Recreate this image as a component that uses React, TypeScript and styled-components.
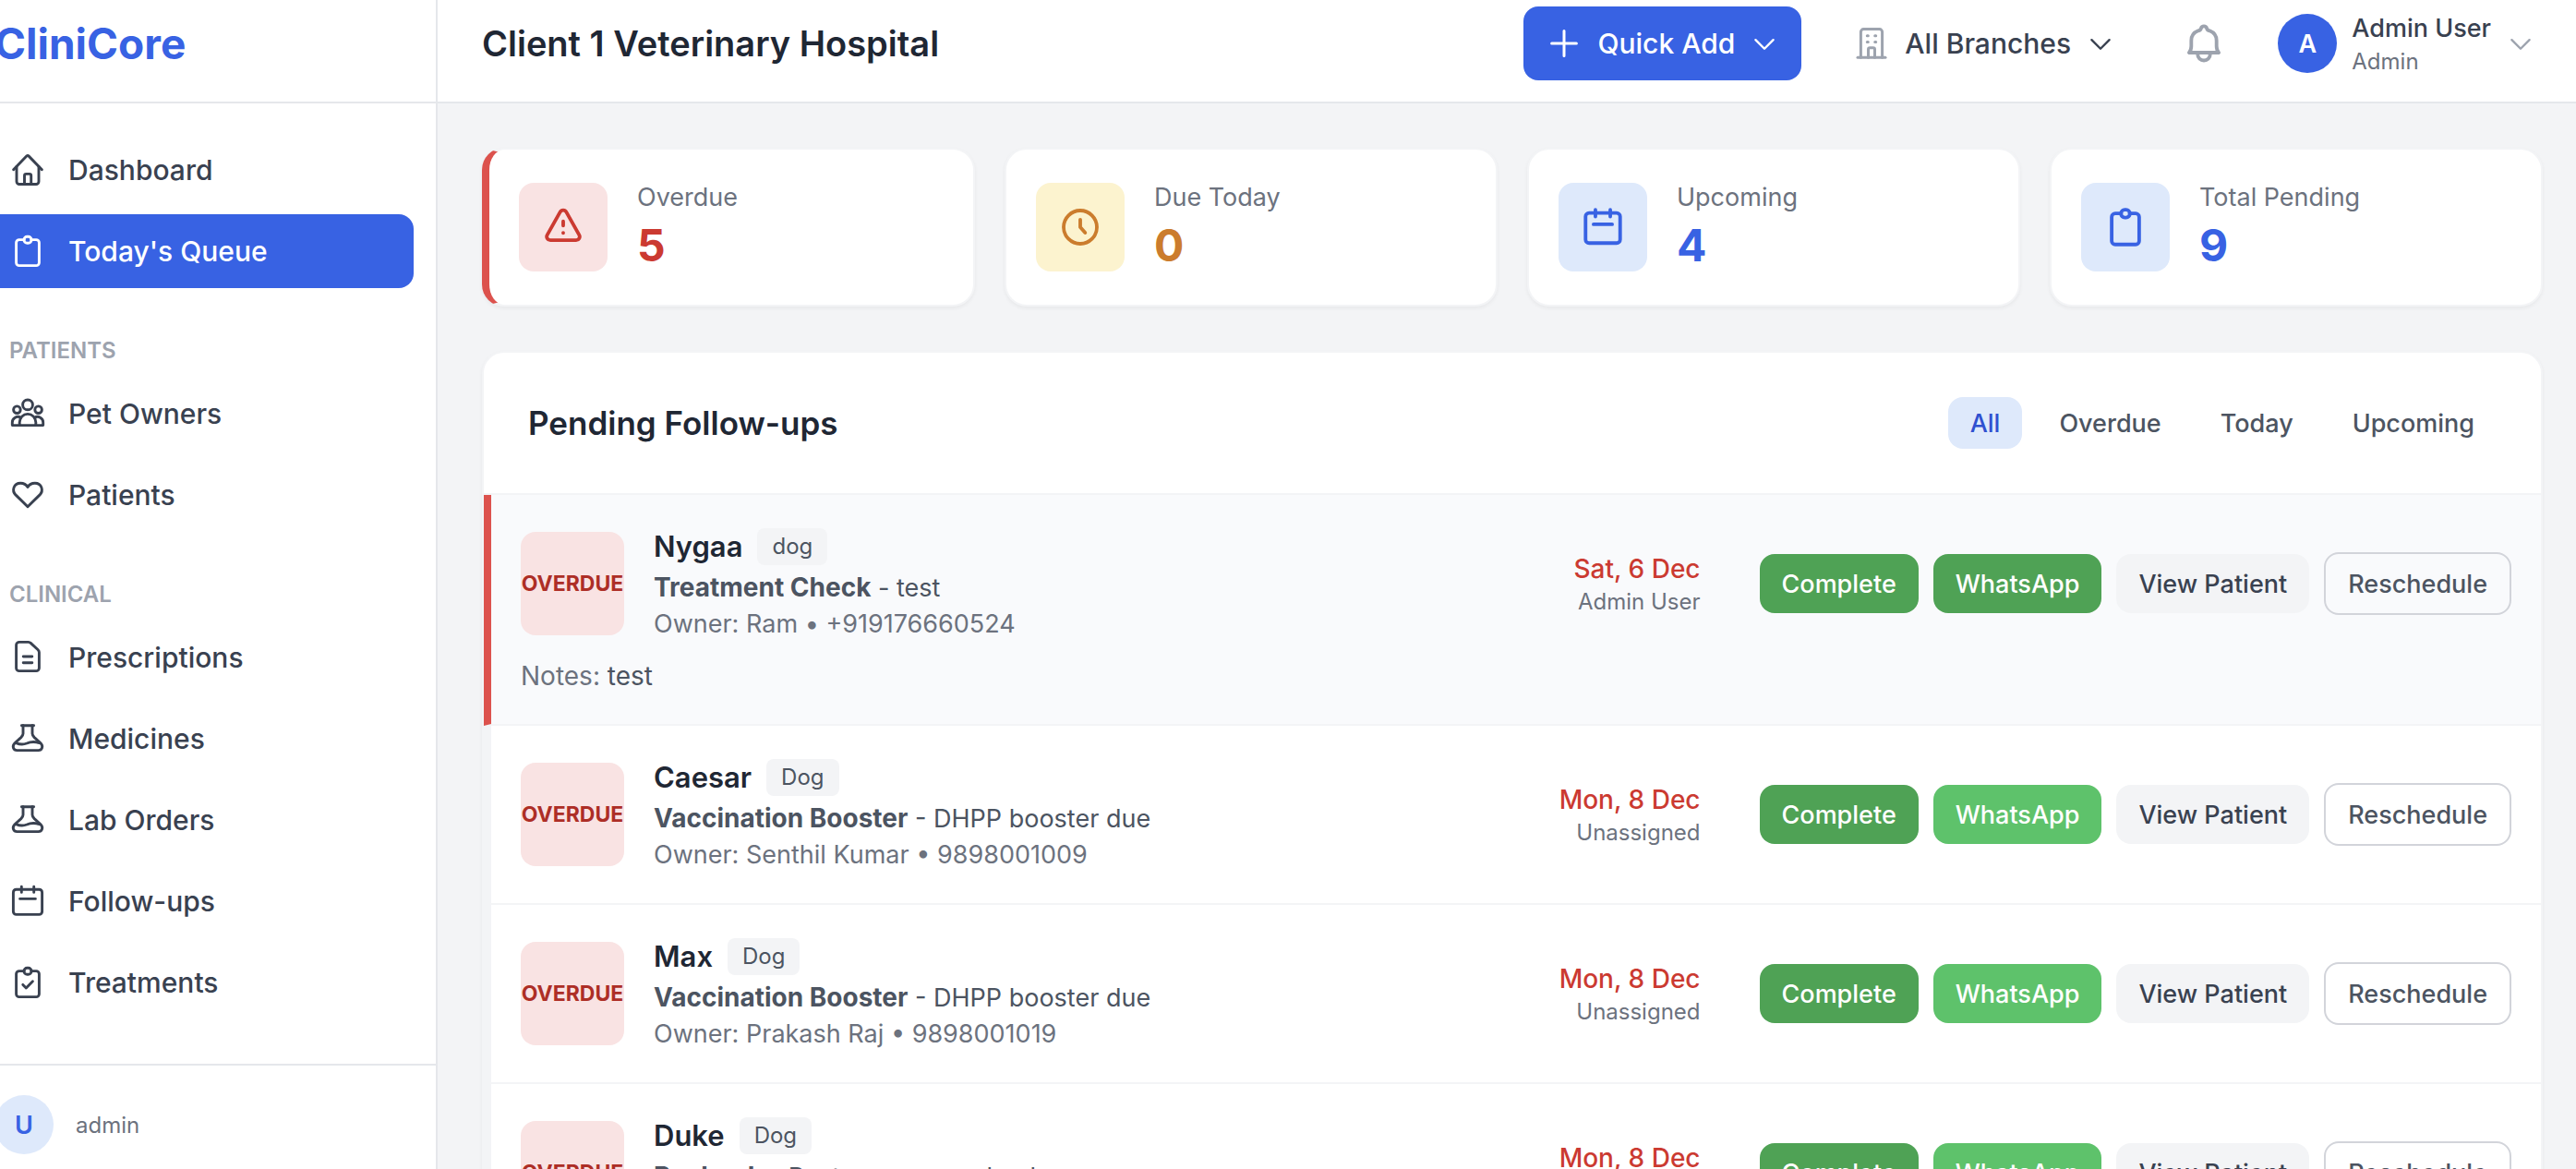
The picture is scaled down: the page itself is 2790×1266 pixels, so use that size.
import React from "react";
import styled, { createGlobalStyle, css } from "styled-components";

const color = {
  blue: "#3862e3",
  blueDark: "#2f50d0",
  blueSoft: "#dee9fb",
  ink: "#1f2734",
  text: "#394150",
  textMid: "#4c5461",
  textSoft: "#6c727e",
  textFaint: "#9da3ae",
  line: "#e5e7eb",
  surface: "#f3f4f6",
  hover: "#f9fafc",
  red: "#cb3a31",
  redDark: "#ad2e26",
  redLine: "#dc524d",
  redSoft: "#f9e3e3",
  amber: "#cb7c2d",
  amberSoft: "#fcf3cf",
  green: "#4fa255",
  greenLight: "#5ec26b",
};

const GlobalStyle = createGlobalStyle`
  *, *::before, *::after { box-sizing: border-box; }
  html, body, #root { height: 100%; }
  body {
    margin: 0;
    overflow: hidden;
    background: ${color.surface};
    color: ${color.text};
    font-family: Inter, "Liberation Sans", sans-serif;
    font-size: 30px;
    -webkit-font-smoothing: antialiased;
  }
  button, select { font: inherit; color: inherit; border: 0; background: none; padding: 0; cursor: pointer; }
  a { color: inherit; text-decoration: none; }
  h1, h2, h3, p, ul, dl, dt, dd { margin: 0; padding: 0; list-style: none; }
`;

/* ---------- icons ---------- */

type IconName =
  | "home" | "clipboard" | "clipboardCheck" | "people" | "heart" | "document"
  | "beaker" | "calendar" | "building" | "bell" | "warning" | "clock" | "plus" | "chevron";

const clipboardBody = (
  <>
    <path d="M16.2 7.6H10.8A3.2 3.2 0 0 0 7.6 10.8V32.4A3.2 3.2 0 0 0 10.8 35.6H29.2A3.2 3.2 0 0 0 32.4 32.4V10.8A3.2 3.2 0 0 0 29.2 7.6H23.8" />
    <rect x="16" y="4.3" width="8" height="7" rx="3.4" />
  </>
);

const shapes: Record<IconName, React.ReactNode> = {
  home: (
    <>
      <path d="M4.6 19.8 18.8 5.1a1.7 1.7 0 0 1 2.4 0L35.4 19.8" />
      <path d="M8 16.5V32.5a3 3 0 0 0 3 3H29a3 3 0 0 0 3-3V16.5" />
      <path d="M16.5 35.5V26.2a1.8 1.8 0 0 1 1.8-1.8h3.6a1.8 1.8 0 0 1 1.8 1.8v9.3" />
    </>
  ),
  clipboard: clipboardBody,
  clipboardCheck: (
    <>
      {clipboardBody}
      <path d="M14.8 22.4 18.3 26 25.4 18.8" />
    </>
  ),
  people: (
    <>
      <circle cx="20" cy="10.4" r="5.4" />
      <circle cx="8.4" cy="15.7" r="3.8" />
      <circle cx="31.6" cy="15.7" r="3.8" />
      <path d="M11.2 32.6V29.2a8.8 8.8 0 0 1 17.6 0V32.6Z" />
      <path d="M11.2 32.6H3.3V29.6A6 6 0 0 1 12.6 24.4" />
      <path d="M28.8 32.6H36.7V29.6A6 6 0 0 0 27.4 24.4" />
    </>
  ),
  heart: (
    <path d="M20 32.8 6.9 19.9C2.6 15.4 4.6 7.2 12.2 7.2c3.4 0 6.2 1.5 7.8 4.3 1.6-2.8 4.4-4.3 7.8-4.3 7.6 0 9.6 8.2 5.3 12.7Z" />
  ),
  document: (
    <>
      <path d="M11 3.4H20.8A3.6 3.6 0 0 1 23.2 4.4L31.2 11.8A3.4 3.4 0 0 1 32.4 14.4V31.4A3.2 3.2 0 0 1 29.2 34.6H10.8A3.2 3.2 0 0 1 7.6 31.4V6.6A3.2 3.2 0 0 1 11 3.4Z" />
      <path d="M15.2 19H24.8M15.2 25.7H24.8" />
    </>
  ),
  beaker: (
    <>
      <path d="M13.4 5.8H26.6" />
      <path d="M15 5.8V14.6C15 16.4 14 17.4 12.8 18.6L6 24.8C2.6 28.4 4.6 32.6 8.4 32.6H31.6C35.4 32.6 37.4 28.4 34 24.8L27.2 18.6C26 17.4 25 16.4 25 14.6V5.8" />
      <path d="M7.4 24.6C11.6 26.4 15.6 26.4 19 25 23 23.2 28 23 32.6 24.6" />
    </>
  ),
  calendar: (
    <>
      <rect x="4.4" y="7.2" width="31.2" height="27.2" rx="3.2" />
      <path d="M13.3 4.3V10.4M26.7 4.3V10.4M11.6 17.4H28.4" />
    </>
  ),
  building: (
    <>
      <path d="M8.4 35.2V7.6A3 3 0 0 1 11.4 4.6H28.6A3 3 0 0 1 31.6 7.6V35.2" />
      <path d="M5 35.2H35" />
      <path d="M16.5 35.2V26.6A1.8 1.8 0 0 1 18.3 24.8H21.7A1.8 1.8 0 0 1 23.5 26.6V35.2" />
      <path d="M15.3 11.8H16.3M23.7 11.8H24.7M15.3 18.4H16.3M23.7 18.4H24.7" />
    </>
  ),
  bell: (
    <>
      <path d="M6.6 28.3C8.2 26.6 8.6 25 8.6 22.6V17.4C8.6 13.2 10.8 10.2 14.8 8.6 16.8 8.2 17.2 7.2 17.4 6.4A2.7 2.7 0 0 1 22.6 6.4C22.8 7.2 23.2 8.2 25.2 8.6 29.2 10.2 31.4 13.2 31.4 17.4V22.6C31.4 25 31.8 26.6 33.4 28.3" />
      <path d="M7 28.3H33" />
      <path d="M14.4 29V30A5.6 5.4 0 0 0 25.6 30V29" />
    </>
  ),
  warning: (
    <>
      <path d="M17.2 6.4A3.2 3.2 0 0 1 22.8 6.4L34.4 27A3.2 3.2 0 0 1 31.6 31.8H8.4A3.2 3.2 0 0 1 5.6 27Z" />
      <path d="M20 14.8V18.6M20 25.1V25.2" />
    </>
  ),
  clock: (
    <>
      <circle cx="20" cy="20" r="15" />
      <path d="M20 13.2V20L24.4 25" />
    </>
  ),
  plus: <path d="M20 6.6V33.4M6.6 20H33.4" />,
  chevron: <path d="M8 15.2 20 27.2 32 15.2" />,
};

const Svg = styled.svg`
  flex: none;
  display: block;
  fill: none;
  stroke: currentColor;
  stroke-linecap: round;
  stroke-linejoin: round;
`;

function Icon({ name, size = 40, weight = 2.9 }: { name: IconName; size?: number; weight?: number }) {
  return (
    <Svg width={size} height={size} viewBox="0 0 40 40" strokeWidth={weight} aria-hidden="true">
      {shapes[name]}
    </Svg>
  );
}

/* ---------- shell ---------- */

const Shell = styled.div`
  display: flex;
  height: calc(100vh + 32px);
  margin: -16px -12px -16px -38px;
`;

const Sidebar = styled.aside`
  flex: none;
  display: flex;
  flex-direction: column;
  width: 512px;
  background: #fff;
  border-right: 2px solid ${color.line};
`;

const Brand = styled.a`
  display: flex;
  align-items: center;
  height: 128px;
  padding: 0 32px;
  border-bottom: 2px solid ${color.line};
  color: ${color.blue};
  font-size: 46px;
  font-weight: 700;
`;

const Nav = styled.nav`
  flex: 1;
  min-height: 0;
  overflow: hidden;
  padding: 32px 24px;
`;

const NavHeading = styled.h2`
  margin: 50px 0 10px;
  padding: 0 24px;
  color: ${color.textFaint};
  font-size: 24px;
  font-weight: 600;
  line-height: 36px;
  text-transform: uppercase;
`;

const NavList = styled.ul`
  display: grid;
  gap: 8px;
`;

const NavLink = styled.a<{ $active?: boolean }>`
  display: flex;
  align-items: center;
  gap: 24px;
  height: 80px;
  padding: 0 24px;
  border-radius: 16px;
  font-weight: 500;
  ${(p) =>
    p.$active &&
    css`
      background: ${color.blue};
      color: #fff;
    `}
`;

const Account = styled.div`
  display: flex;
  align-items: center;
  gap: 24px;
  padding: 32px;
  border-top: 2px solid ${color.line};
  color: ${color.textSoft};
  font-size: 24px;
`;

const Avatar = styled.span<{ $solid?: boolean }>`
  flex: none;
  display: grid;
  place-items: center;
  width: 64px;
  height: 64px;
  border-radius: 50%;
  background: ${(p) => (p.$solid ? color.blue : color.blueSoft)};
  color: ${(p) => (p.$solid ? "#fff" : color.blue)};
  font-size: 27px;
  font-weight: 600;
`;

const Main = styled.div`
  flex: 1;
  min-width: 0;
  display: flex;
  flex-direction: column;
`;

const TopBar = styled.header`
  flex: none;
  display: flex;
  align-items: center;
  gap: 32px;
  height: 128px;
  padding: 0 48px;
  background: #fff;
  border-bottom: 2px solid ${color.line};
  font-weight: 500;
`;

const Hospital = styled.h1`
  flex: 1;
  color: ${color.ink};
  font-size: 38px;
  font-weight: 600;
`;

const QuickAdd = styled.button`
  display: flex;
  align-items: center;
  gap: 16px;
  height: 80px;
  && {
    padding: 0 24px;
    border-radius: 16px;
    background: ${color.blue};
    color: #fff;
  }
`;

const Branch = styled.label`
  display: flex;
  align-items: center;
  gap: 16px;
  padding: 0 24px;
`;

const BranchSelect = styled.select`
  appearance: none;
  outline: 0;
`;

const Muted = styled.span`
  display: flex;
  color: ${color.textFaint};
`;

const BellButton = styled.button`
  && {
    padding: 16px;
    color: ${color.textFaint};
  }
`;

const UserButton = styled.button`
  display: flex;
  align-items: center;
  gap: 16px;
  && {
    padding: 8px;
    text-align: left;
  }
`;

const UserName = styled.span`
  display: block;
  font-size: 27px;
  font-weight: 500;
  line-height: 40px;
`;

const UserRole = styled.span`
  display: block;
  color: ${color.textSoft};
  font-size: 24px;
  font-weight: 400;
  line-height: 32px;
`;

const Content = styled.main`
  flex: 1;
  min-height: 0;
  overflow: hidden;
  padding: 48px;
  display: flex;
  flex-direction: column;
  gap: 48px;
`;

/* ---------- summary cards ---------- */

const Stats = styled.dl`
  flex: none;
  display: grid;
  grid-template-columns: repeat(4, 1fr);
  gap: 32px;
`;

const card = css`
  background: #fff;
  border: 2px solid ${color.surface};
  border-radius: 24px;
  box-shadow: 0 2px 4px rgba(0, 0, 0, 0.05);
`;

const StatCard = styled.div<{ $flag?: boolean }>`
  ${card}
  display: flex;
  align-items: center;
  gap: 32px;
  padding: 32px;
  ${(p) => p.$flag && css`border-left: 8px solid ${color.redLine};`}
`;

const StatIcon = styled.span<{ $bg: string; $fg: string }>`
  flex: none;
  display: grid;
  place-items: center;
  width: 96px;
  height: 96px;
  border-radius: 16px;
  background: ${(p) => p.$bg};
  color: ${(p) => p.$fg};
`;

const StatLabel = styled.dt`
  color: ${color.textSoft};
  font-size: 27px;
  line-height: 40px;
`;

const StatValue = styled.dd<{ $fg: string }>`
  color: ${(p) => p.$fg};
  font-size: 48px;
  font-weight: 700;
  line-height: 64px;
`;

/* ---------- follow-up list ---------- */

const Panel = styled.section`
  ${card}
  flex: none;
  overflow: hidden;
`;

const PanelHeader = styled.div`
  display: flex;
  align-items: center;
  justify-content: space-between;
  padding: 48px;
  border-bottom: 2px solid ${color.surface};
`;

const PanelTitle = styled.h2`
  color: ${color.ink};
  font-size: 35px;
  font-weight: 600;
  line-height: 56px;
`;

const Tabs = styled.div`
  display: flex;
  gap: 16px;
`;

const Tab = styled.button<{ $active?: boolean }>`
  && {
    height: 56px;
    padding: 0 24px;
    border-radius: 16px;
    background: ${(p) => (p.$active ? color.blueSoft : "transparent")};
    color: ${(p) => (p.$active ? color.blueDark : color.textMid)};
    font-size: 27px;
    font-weight: 500;
  }
`;

const Row = styled.li<{ $hovered?: boolean }>`
  padding: 32px;
  border-left: 8px solid ${(p) => (p.$hovered ? color.redLine : color.surface)};
  border-bottom: 2px solid ${color.surface};
  background: ${(p) => (p.$hovered ? color.hover : "#fff")};
`;

const RowMain = styled.div`
  display: flex;
  align-items: center;
  gap: 32px;
`;

const Status = styled.span`
  flex: none;
  display: grid;
  place-content: center;
  width: 112px;
  height: 112px;
  border-radius: 16px;
  background: ${color.redSoft};
  color: ${color.redDark};
  font-size: 23px;
  font-weight: 700;
`;

const Info = styled.div`
  flex: 1;
  min-width: 0;
  font-size: 27px;
  line-height: 40px;
`;

const NameLine = styled.div`
  display: flex;
  align-items: center;
  gap: 16px;
  height: 48px;
`;

const PetName = styled.h3`
  color: ${color.ink};
  font-size: 31px;
  font-weight: 600;
  line-height: 48px;
`;

const Species = styled.span`
  padding: 4px 16px;
  border-radius: 8px;
  background: ${color.surface};
  color: ${color.textMid};
  font-size: 24px;
  line-height: 32px;
`;

const Reason = styled.p`
  height: 40px;
  color: ${color.textMid};
  white-space: nowrap;
`;

const ReasonType = styled.strong`
  font-size: 28px;
`;

const Owner = styled.p`
  color: ${color.textSoft};
`;

const Notes = styled.p`
  margin-top: 16px;
  color: ${color.textSoft};
  font-size: 28px;
  line-height: 40px;
`;

const NoteText = styled.span`
  color: ${color.textMid};
`;

const Due = styled.div`
  margin-right: 32px;
  text-align: right;
`;

const DueDate = styled.p`
  color: ${color.red};
  font-size: 28px;
  font-weight: 500;
  line-height: 40px;
`;

const Assignee = styled.p`
  color: ${color.textSoft};
  font-size: 24px;
  line-height: 32px;
`;

const Actions = styled.div`
  display: flex;
  align-items: center;
  gap: 16px;
`;

const actionLook = {
  primary: css`background: ${color.green}; color: #fff;`,
  chat: css`background: ${color.greenLight}; color: #fff;`,
  plain: css`background: ${color.surface}; color: ${color.text};`,
  outline: css`height: 68px; border: 2px solid #d2d4da; color: ${color.textMid};`,
};

const Action = styled.button<{ $look: keyof typeof actionLook }>`
  && {
    height: 64px;
    padding: 0 24px;
    border-radius: 16px;
    font-size: 27px;
    font-weight: 500;
    white-space: nowrap;
    ${(p) => actionLook[p.$look]}
  }
`;

/* ---------- data ---------- */

type NavItem = { label: string; icon: IconName; active?: boolean };

const navGroups: { title?: string; items: NavItem[] }[] = [
  {
    items: [
      { label: "Dashboard", icon: "home" },
      { label: "Today's Queue", icon: "clipboard", active: true },
    ],
  },
  {
    title: "Patients",
    items: [
      { label: "Pet Owners", icon: "people" },
      { label: "Patients", icon: "heart" },
    ],
  },
  {
    title: "Clinical",
    items: [
      { label: "Prescriptions", icon: "document" },
      { label: "Medicines", icon: "beaker" },
      { label: "Lab Orders", icon: "beaker" },
      { label: "Follow-ups", icon: "calendar" },
      { label: "Treatments", icon: "clipboardCheck" },
    ],
  },
];

const stats: { label: string; value: number; icon: IconName; bg: string; fg: string; flag?: boolean }[] = [
  { label: "Overdue", value: 5, icon: "warning", bg: color.redSoft, fg: color.red, flag: true },
  { label: "Due Today", value: 0, icon: "clock", bg: color.amberSoft, fg: color.amber },
  { label: "Upcoming", value: 4, icon: "calendar", bg: color.blueSoft, fg: color.blue },
  { label: "Total Pending", value: 9, icon: "clipboard", bg: color.blueSoft, fg: color.blue },
];

type FollowUp = {
  name: string;
  species: string;
  type: string;
  detail: string;
  owner?: string;
  date: string;
  assignee: string;
  notes?: string;
  hovered?: boolean;
};

const followUps: FollowUp[] = [
  { name: "Nygaa", species: "dog", type: "Treatment Check", detail: "test", owner: "Ram • +919176660524", date: "Sat, 6 Dec", assignee: "Admin User", notes: "test", hovered: true },
  { name: "Caesar", species: "Dog", type: "Vaccination Booster", detail: "DHPP booster due", owner: "Senthil Kumar • 9898001009", date: "Mon, 8 Dec", assignee: "Unassigned" },
  { name: "Max", species: "Dog", type: "Vaccination Booster", detail: "DHPP booster due", owner: "Prakash Raj • 9898001019", date: "Mon, 8 Dec", assignee: "Unassigned" },
  { name: "Duke", species: "Dog", type: "Recheck", detail: "Post-surgery recheck", date: "Mon, 8 Dec", assignee: "Unassigned" },
];

export default function App() {
  return (
    <>
      <GlobalStyle />
      <Shell>
        <Sidebar>
          <Brand href="#">CliniCore</Brand>
          <Nav aria-label="Main">
            {navGroups.map((group) => (
              <React.Fragment key={group.title ?? "top"}>
                {group.title && <NavHeading>{group.title}</NavHeading>}
                <NavList>
                  {group.items.map((item) => (
                    <li key={item.label}>
                      <NavLink href="#" $active={item.active} aria-current={item.active ? "page" : undefined}>
                        <Icon name={item.icon} />
                        {item.label}
                      </NavLink>
                    </li>
                  ))}
                </NavList>
              </React.Fragment>
            ))}
          </Nav>
          <Account>
            <Avatar>U</Avatar>
            admin
          </Account>
        </Sidebar>

        <Main>
          <TopBar>
            <Hospital>Client 1 Veterinary Hospital</Hospital>
            <QuickAdd type="button">
              <Icon name="plus" weight={3} />
              Quick Add
              <Icon name="chevron" size={32} weight={3} />
            </QuickAdd>
            <Branch>
              <Muted><Icon name="building" weight={3} /></Muted>
              <BranchSelect aria-label="Branch">
                <option>All Branches</option>
              </BranchSelect>
              <Icon name="chevron" size={32} weight={3} />
            </Branch>
            <BellButton type="button" aria-label="Notifications">
              <Icon name="bell" size={48} weight={3.2} />
            </BellButton>
            <UserButton type="button">
              <Avatar $solid>A</Avatar>
              <span>
                <UserName>Admin User</UserName>
                <UserRole>Admin</UserRole>
              </span>
              <Muted><Icon name="chevron" size={32} weight={3} /></Muted>
            </UserButton>
          </TopBar>

          <Content>
            <Stats>
              {stats.map((s) => (
                <StatCard key={s.label} $flag={s.flag}>
                  <StatIcon $bg={s.bg} $fg={s.fg}>
                    <Icon name={s.icon} size={48} weight={3.2} />
                  </StatIcon>
                  <div>
                    <StatLabel>{s.label}</StatLabel>
                    <StatValue $fg={s.fg}>{s.value}</StatValue>
                  </div>
                </StatCard>
              ))}
            </Stats>

            <Panel>
              <PanelHeader>
                <PanelTitle>Pending Follow-ups</PanelTitle>
                <Tabs>
                  {["All", "Overdue", "Today", "Upcoming"].map((t, i) => (
                    <Tab key={t} type="button" $active={i === 0} aria-pressed={i === 0}>{t}</Tab>
                  ))}
                </Tabs>
              </PanelHeader>
              <ul>
                {followUps.map((f) => (
                  <Row key={f.name} $hovered={f.hovered}>
                    <RowMain>
                      <Status>OVERDUE</Status>
                      <Info>
                        <NameLine>
                          <PetName>{f.name}</PetName>
                          <Species>{f.species}</Species>
                        </NameLine>
                        <Reason><ReasonType>{f.type}</ReasonType> - {f.detail}</Reason>
                        <Owner>Owner: {f.owner}</Owner>
                      </Info>
                      <Due>
                        <DueDate>{f.date}</DueDate>
                        <Assignee>{f.assignee}</Assignee>
                      </Due>
                      <Actions>
                        <Action type="button" $look="primary">Complete</Action>
                        <Action type="button" $look={f.hovered ? "primary" : "chat"}>WhatsApp</Action>
                        <Action type="button" $look="plain">View Patient</Action>
                        <Action type="button" $look="outline">Reschedule</Action>
                      </Actions>
                    </RowMain>
                    {f.notes && <Notes>Notes: <NoteText>{f.notes}</NoteText></Notes>}
                  </Row>
                ))}
              </ul>
            </Panel>
          </Content>
        </Main>
      </Shell>
    </>
  );
}
